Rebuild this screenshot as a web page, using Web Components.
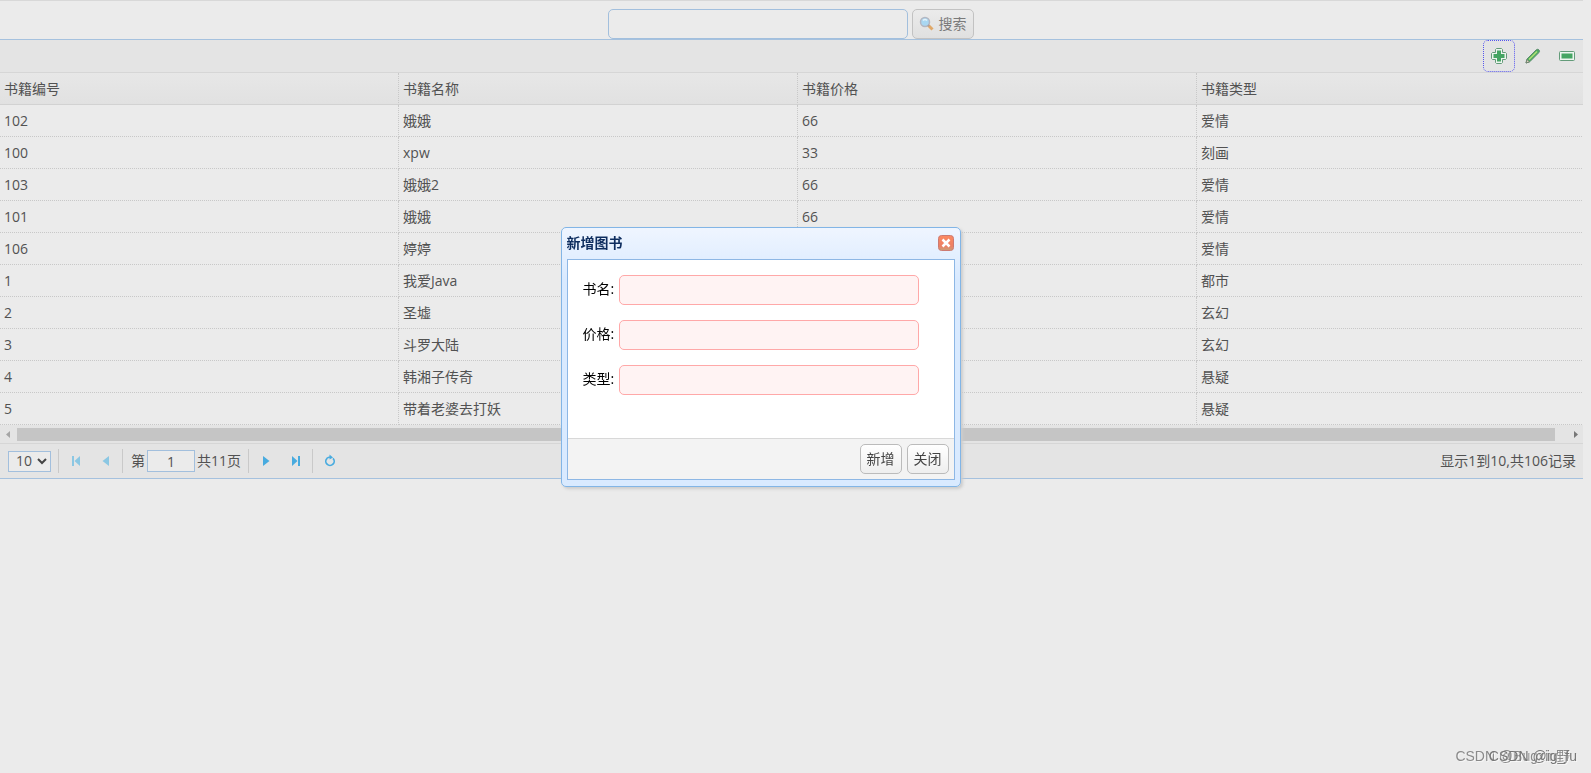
<!DOCTYPE html>
<html lang="zh">
<head>
<meta charset="utf-8">
<title>图书管理</title>
<style>
html { height: 100%; background: #ebebeb; }
body { margin: 0 8px 0 0; min-height: 100%; font: 14px/20px "Open Sans", "Noto Sans CJK SC", sans-serif; color: #525252; }
</style>
</head>
<body>
<book-page></book-page>
<script>
const icons = {
  search: '<circle cx="6" cy="6" r="4.5" fill="#a9d7f2" stroke="#b3b7c2" stroke-width="1.5"/><path d="M4 4.5q2-2 4 0" stroke="#e4f3fb" stroke-width="1.5" fill="none"/><path d="M9.5 9.5l4 4" stroke="#e0a868" stroke-width="3"/><path d="M9 9l1 1" stroke="#a1a1ab" stroke-width="2"/>',
  add: '<path d="M5.500 .5h5l1 1v3h3l1 1v5l-1 1h-3v3l-1 1h-5l-1-1v-3h-3l-1-1v-5l1-1h3v-3z" fill="#edf5ef" stroke="#639b79"/><path d="M6 2.500h4v3.500h3.500v4h-3.500v3.500h-4v-3.500h-3.500v-4h3.500z" fill="#45a563"/>',
  edit: '<path d="M1 15l1-4 9-9q2-1.500 3 0 1.200 1-.3 2.800l-9 9z" fill="#4aad61" stroke="#5c8b6c"/><path d="M4 11.500l8-8" stroke="#b3df75" stroke-width="1.500"/><path d="M1 15l1-3.500 2.500 2.300z" fill="#ded9bd" stroke="#687669" stroke-width=".8"/>',
  remove: '<rect x=".5" y="3.500" width="15" height="9" rx="1" fill="#edf5ef" stroke="#639b79"/><rect x="2.500" y="5.500" width="11" height="5" fill="#45a563"/>',
  first: '<path d="M4 3h2v10H4zM12 3v10L6.500 8z" fill="#8bc7e3"/>',
  prev: '<path d="M11 3v10L4.500 8z" fill="#8bc7e3"/>',
  next: '<path d="M5 3v10l6.500-5z" fill="#48abdf"/>',
  last: '<path d="M10 3h2v10h-2zM4 3v10l5.500-5z" fill="#48abdf"/>',
  load: '<path d="M5 5.300A4.200 4.200 0 1 0 11 5.300" fill="none" stroke="#48abdf" stroke-width="1.700"/><path d="M5 5.300Q6.200 4 8.500 4" fill="none" stroke="#48abdf" stroke-width="1.700"/><path d="M7.500 1.500v5l3.500-2z" fill="#48abdf"/>'
};
const define = (name, markup) => {
  const template = document.createElement('template');
  template.innerHTML = markup;
  customElements.define(name, class extends HTMLElement {
    constructor() {
      super();
      this.attachShadow({ mode: 'open' }).append(template.content.cloneNode(true));
    }
  });
};

customElements.define('ui-icon', class extends HTMLElement {
  connectedCallback() {
    const root = this.shadowRoot || this.attachShadow({ mode: 'open' });
    root.innerHTML = `<style>:host{display:block;flex:none;width:16px;height:16px}svg{display:block}</style><svg width="16" height="16" viewBox="0 0 16 16" aria-hidden="true">${icons[this.getAttribute('name')]}</svg>`;
  }
});

customElements.define('tool-button', class extends HTMLElement {
  connectedCallback() {
    const root = this.shadowRoot || this.attachShadow({ mode: 'open' });
    root.innerHTML = `<style>
      :host{display:block;flex:none}
      button{display:flex;align-items:center;justify-content:center;box-sizing:border-box;width:var(--tool,32px);height:var(--tool,32px);padding:0;border:1px solid transparent;border-radius:5px;background:none}
      :host([focused]) button{border:1px dotted #5555ee}
    </style><button type="button" aria-label="${this.getAttribute('label')}"><ui-icon name="${this.getAttribute('icon')}"></ui-icon></button>`;
  }
});

define('push-button', `<style>
  :host{display:block;flex:none}
  button{display:flex;align-items:center;gap:4px;box-sizing:border-box;height:30px;padding:0 6px;border:1px solid #bbb;border-radius:5px;font:inherit;color:#444;background:linear-gradient(#fff,#eee)}
  :host([dim]) button{border-color:#c2c2c2;color:#7a7a7a;background:linear-gradient(#ebebeb,#e0e0e0)}
</style><button type="button"><slot name="icon"></slot><slot></slot></button>`);

define('search-bar', `<style>
  :host{display:flex;justify-content:center;gap:4px;padding:8px 2px 0 0;border-bottom:1px solid #a5c1de}
  input{box-sizing:border-box;width:300px;height:30px;margin:0;padding:0 4px;border:1px solid #a2bfdd;border-radius:5px;background:#ebebeb;font:inherit;outline:none}
</style><input type="text" aria-label="搜索书籍"><push-button dim><ui-icon slot="icon" name="search"></ui-icon>搜索</push-button>`);

define('grid-toolbar', `<style>
  :host{display:flex;justify-content:flex-end;gap:2px;background:#e4e4e4;border-bottom:1px solid #d6d6d6}
</style><tool-button icon="add" label="新增" focused></tool-button><tool-button icon="edit" label="编辑"></tool-button><tool-button icon="remove" label="删除"></tool-button>`);

const books = [
  ['102', '娥娥', '66', '爱情'], ['100', 'xpw', '33', '刻画'], ['103', '娥娥2', '66', '爱情'],
  ['101', '娥娥', '66', '爱情'], ['106', '婷婷', '66', '爱情'], ['1', '我爱Java', '66', '都市'],
  ['2', '圣墟', '66', '玄幻'], ['3', '斗罗大陆', '66', '玄幻'], ['4', '韩湘子传奇', '66', '悬疑'],
  ['5', '带着老婆去打妖', '66', '悬疑']
];
define('book-grid', `<style>
  :host{display:block;overflow:hidden}
  table{width:calc(100% + 13px);table-layout:fixed;border-collapse:separate;border-spacing:0}
  th,td{box-sizing:border-box;height:32px;padding:0 4px;border:0 dotted #c8c8c8;border-width:0 1px 1px 0;text-align:left;font-weight:400}
  th{border-bottom:1px solid #d2d2d2}
  thead tr{background:linear-gradient(#e7e7e7,#e1e1e1)}
</style><table><thead><tr>${['书籍编号', '书籍名称', '书籍价格', '书籍类型'].map(h => `<th scope="col">${h}</th>`).join('')}</tr></thead>
<tbody>${books.map(b => `<tr>${b.map(c => `<td>${c}</td>`).join('')}</tr>`).join('')}</tbody></table>`);

define('scroll-track', `<style>
  :host{display:flex;align-items:center;height:18px;background:#e4e4e4;border-bottom:1px solid #d6d6d6}
  svg{flex:none;width:17px;height:17px}
  .track{flex:1;padding-right:11px}
  .thumb{height:13px;background:#c5c5c5}
</style><svg viewBox="0 0 17 17" aria-hidden="true"><path d="M10 5v7L6 8.500z" fill="#a5a5a5"/></svg><div class="track"><div class="thumb"></div></div><svg viewBox="0 0 17 17" aria-hidden="true"><path d="M8 5v7l4-3.500z" fill="#777"/></svg>`);

define('grid-pager', `<style>
  :host{display:flex;align-items:center;height:34px;padding:0 7px 0 8px;background:#e4e4e4;border-bottom:1px solid #a5c1de;--tool:28px}
  .size{display:flex;position:relative;width:43px;margin-right:5px}
  select{appearance:none;box-sizing:border-box;width:100%;height:21px;margin:0;padding:0 0 0 7px;border:1px solid #a2bfdd;border-radius:0;background:#ebebeb;color:inherit;font:inherit;line-height:18px}
  .size svg{position:absolute;right:4px;top:7px;pointer-events:none}
  i{width:1px;height:24px;background:#c9c9c9;margin:0 3px 0 2px}
  .pair{display:flex;gap:2px}
  label{display:flex;align-items:center;gap:2px;margin:0 5px}
  input{box-sizing:border-box;width:48px;height:22px;margin:0;padding:0;border:1px solid #a2bfdd;background:#ebebeb;color:inherit;font:inherit;text-align:center}
  .info{margin-left:auto}
</style>
<div class="size"><select aria-label="每页条数"><option>10</option><option>20</option></select><svg width="10" height="7" viewBox="0 0 10 7" aria-hidden="true"><path d="M1 1l4 4 4-4" fill="none" stroke="#444" stroke-width="2"/></svg></div>
<i></i><div class="pair"><tool-button icon="first" label="首页"></tool-button><tool-button icon="prev" label="上一页"></tool-button></div>
<i></i><label>第<input type="text" value="1">共11页</label>
<i></i><div class="pair"><tool-button icon="next" label="下一页"></tool-button><tool-button icon="last" label="末页"></tool-button></div>
<i></i><tool-button icon="load" label="刷新"></tool-button>
<span class="info">显示1到10,共106记录</span>`);

define('form-row', `<style>
  :host{display:block}
  label{display:flex;align-items:center;gap:5px;color:#000}
  span{padding-bottom:2px}
  input{box-sizing:border-box;width:300px;height:30px;margin:0;padding:0 4px;border:1px solid #ffa8a8;border-radius:5px;background:#fff3f3;font:inherit}
</style><label><span><slot></slot></span><input type="text" required></label>`);

define('book-dialog', `<style>
  :host{position:fixed;left:0;right:70px;top:227px;margin:auto;box-sizing:border-box;width:400px;padding:5px 5px 6px;border:1px solid #82b5e6;border-radius:5px;background:linear-gradient(#eff5ff,#d9eaff 20%);box-shadow:2px 2px 3px #ccc}
  header{display:flex;align-items:center;justify-content:space-between;height:20px;padding:0 1px 6px 0}
  h2{margin:0;font-size:14px;line-height:20px;font-weight:700;color:#0e2d5f}
  header button{display:block;width:16px;height:16px;padding:0;border:0;background:none}
  svg{display:block}
  .frame{border:1px solid #8db7e5;background:#fff}
  form{display:flex;flex-direction:column;gap:15px;padding:15px 15px 43px}
  footer{display:flex;justify-content:flex-end;gap:5px;padding:5px;border-top:1px solid #d8d8d8;background:#f3f3f3}
</style>
<header><h2>新增图书</h2><button type="button" aria-label="关闭窗口"><svg width="16" height="16" viewBox="0 0 16 16"><defs><linearGradient id="r" x2="0" y2="1"><stop stop-color="#fb8a62"/><stop offset=".7" stop-color="#ed8064"/><stop offset="1" stop-color="#c9a078"/></linearGradient></defs><rect x=".5" y=".5" width="15" height="15" rx="3" fill="url(#r)" stroke="#cc7a72"/><path d="M4.500 4.500l7 7m0-7l-7 7" stroke="#fff" stroke-width="2.500"/></svg></button></header>
<div class="frame"><form><form-row>书名:</form-row><form-row>价格:</form-row><form-row>类型:</form-row></form>
<footer><push-button>新增</push-button><push-button>关闭</push-button></footer></div>`);

define('water-mark', `<style>
  :host{position:fixed;right:14px;bottom:7px;display:grid;justify-items:end;font:14px/20px "Liberation Sans","Noto Sans CJK SC",sans-serif;text-shadow:1px 1px 0 #fff8}
  span{grid-area:1/1;color:#8a8a8a}
  .under{color:#777}
  .over{margin-right:7px}
</style><span class="over">CSDN @Bugxin野</span><span class="under">CSDN @ig_fu</span>`);

define('book-page', `<style>:host{display:block}.rule{height:1px;margin-right:-8px;background:#d8d8d8}</style>
<div class="rule"></div><search-bar></search-bar><grid-toolbar></grid-toolbar><book-grid></book-grid><scroll-track></scroll-track><grid-pager></grid-pager><book-dialog></book-dialog><water-mark></water-mark>`);
</script>
</body>
</html>
